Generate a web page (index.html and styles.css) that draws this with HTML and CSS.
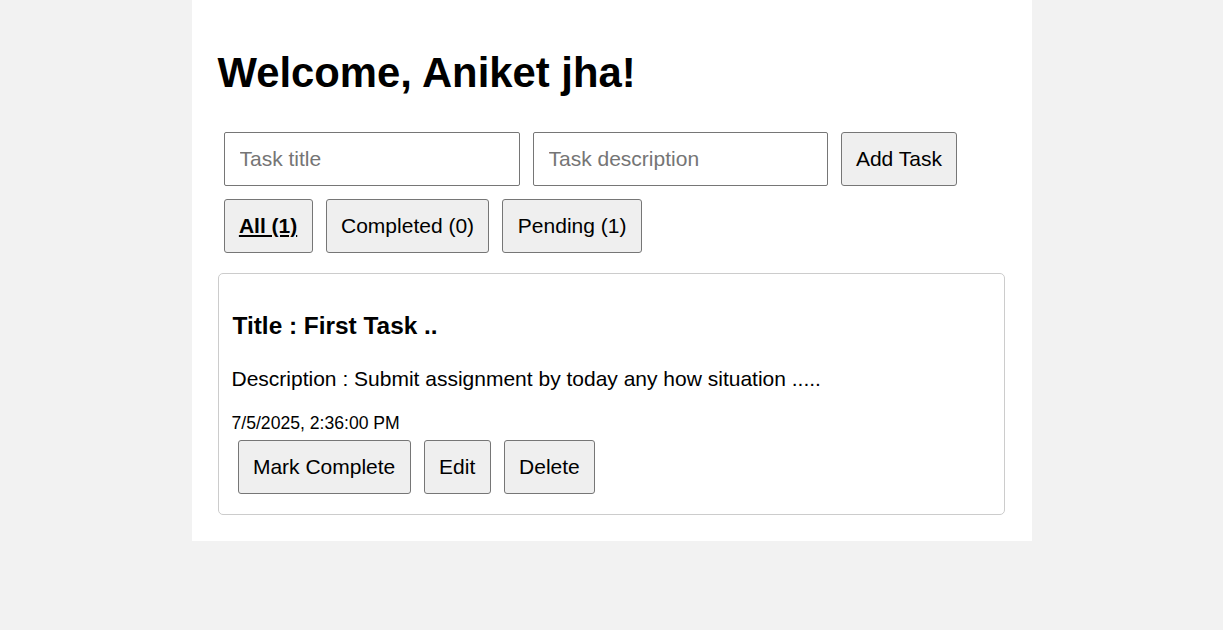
FILE: index.html
```html
<!DOCTYPE html>
<html lang="en">
<head>
<meta charset="utf-8">
<title>Tasks</title>
<link rel="stylesheet" href="styles.css">
</head>
<body>
<div class="container">
  <h1 class="welcome">Welcome, Aniket jha!</h1>
  <div class="form-row">
    <input class="field" type="text" placeholder="Task title">
    <input class="field" type="text" placeholder="Task description">
    <button class="btn">Add Task</button>
  </div>
  <div class="filter-row">
    <button class="btn active">All (1)</button>
    <button class="btn">Completed (0)</button>
    <button class="btn">Pending (1)</button>
  </div>
  <div class="card">
    <h3 class="task-title">Title : First Task ..</h3>
    <p class="task-desc">Description : Submit assignment by today any how situation .....</p>
    <p class="task-date">7/5/2025, 2:36:00 PM</p>
    <div class="actions">
      <button class="btn">Mark Complete</button>
      <button class="btn">Edit</button>
      <button class="btn">Delete</button>
    </div>
  </div>
</div>
</body>
</html>
```
FILE: styles.css
```css
* { box-sizing: border-box; }
html, body {
  margin: 0;
  padding: 0;
  background: #f2f2f2;
  font-family: Arial, "Liberation Sans", sans-serif;
  color: #000;
}
.container {
  width: 840px;
  margin: 0 auto;
  background: #fff;
  padding: 26px 27px 26px 26px;
}
.welcome {
  font-size: 41.8px;
  line-height: 48px;
  font-weight: bold;
  margin: 23px 0 35px;
}
.form-row,
.filter-row {
  display: flex;
  gap: 13px;
  padding-left: 6px;
}
.filter-row { margin-top: 13px; }
.field {
  width: 296px;
  height: 54px;
  padding: 0 15px;
  font-family: Arial, "Liberation Sans", sans-serif;
  font-size: 21px;
  border: 1px solid #767676;
  border-radius: 2px;
  background: #fff;
  color: #000;
  outline: none;
}
.field + .field { width: 295px; }
.field::placeholder { color: #757575; }
.btn {
  height: 54px;
  padding: 0 14.4px;
  font-family: Arial, "Liberation Sans", sans-serif;
  font-size: 21px;
  color: #000;
  background: #efefef;
  border: 1px solid #767676;
  border-radius: 3px;
  cursor: pointer;
}
.btn.active {
  font-weight: bold;
  text-decoration: underline;
}
.card {
  margin-top: 20px;
  border: 1px solid #ccc;
  border-radius: 5px;
  padding: 14px 13px;
}
.task-title {
  font-size: 24.4px;
  line-height: 28px;
  font-weight: bold;
  margin: 24px 0 0 1px;
}
.task-desc {
  font-size: 21px;
  line-height: 23px;
  margin: 27px 0 0;
}
.task-date {
  font-size: 17.6px;
  line-height: 20px;
  margin: 23px 0 0;
}
.actions {
  display: flex;
  gap: 13px;
  margin-top: 7px;
  padding: 0 0 6px 6px;
}
```
